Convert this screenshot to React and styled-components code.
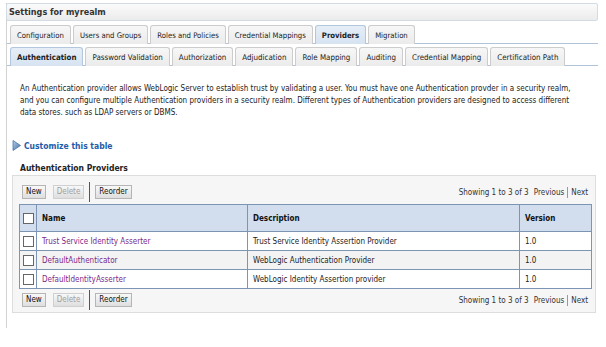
import React from "react";
import styled, { createGlobalStyle } from "styled-components";

const GlobalStyle = createGlobalStyle`
  html, body {
    margin: 0;
    padding: 0;
    background: #ffffff;
  }
  body {
    font-family: "DejaVu Sans Condensed", "DejaVu Sans", sans-serif;
    color: #000000;
  }
`;

const topTabs = [
  "Configuration",
  "Users and Groups",
  "Roles and Policies",
  "Credential Mappings",
  "Providers",
  "Migration",
];

const subTabs = [
  "Authentication",
  "Password Validation",
  "Authorization",
  "Adjudication",
  "Role Mapping",
  "Auditing",
  "Credential Mapping",
  "Certification Path",
];

const providers = [
  { name: "Trust Service Identity Asserter", desc: "Trust Service Identity Assertion Provider", version: "1.0" },
  { name: "DefaultAuthenticator", desc: "WebLogic Authentication Provider", version: "1.0" },
  { name: "DefaultIdentityAsserter", desc: "WebLogic Identity Assertion provider", version: "1.0" },
];

function ButtonBar({ bottom }) {
  return (
    <BarRow $bottom={bottom}>
      <Buttons>
        <Btn>New</Btn>
        <Btn disabled>Delete</Btn>
        <Divider />
        <Btn>Reorder</Btn>
      </Buttons>
      <Pager>
        Showing 1 to 3 of 3 <PagerLink>Previous</PagerLink>
        <PagerSep /> <PagerLink>Next</PagerLink>
      </Pager>
    </BarRow>
  );
}

function App() {
  return (
    <>
      <GlobalStyle />
      <Page>
        <Frame>
          <Header>Settings for myrealm</Header>
          <TabRow>
            {topTabs.map((t) => (
              <Tab key={t} $active={t === "Providers"}>
                {t}
              </Tab>
            ))}
          </TabRow>
          <TabRow $sub>
            {subTabs.map((t) => (
              <Tab key={t} $sub $active={t === "Authentication"}>
                {t}
              </Tab>
            ))}
          </TabRow>
          <Content>
            <Intro>
              An Authentication provider allows WebLogic Server to establish trust by validating a user. You must have one
              Authentication provder in a security realm,
              <br />
              and you can configure multiple Authentication providers in a security realm. Different types of
              Authentication providers are designed to access different
              <br />
              data stores. such as LDAP servers or DBMS.
            </Intro>
            <Customize>
              <svg width="9" height="11" viewBox="0 0 9 11">
                <defs>
                  <linearGradient id="tri" x1="0" y1="0" x2="1" y2="1">
                    <stop offset="0" stopColor="#b9cde6" />
                    <stop offset="1" stopColor="#3f6ea8" />
                  </linearGradient>
                </defs>
                <path d="M1 0.5 L8.5 5.5 L1 10.5 Z" fill="url(#tri)" stroke="#4d76a8" strokeWidth="0.8" />
              </svg>
              <span>Customize this table</span>
            </Customize>
            <SectionTitle>Authentication Providers</SectionTitle>
            <TableBox>
              <ButtonBar />
              <Table>
                <thead>
                  <tr>
                    <Th $w={17} $check>
                      <Box />
                    </Th>
                    <Th $w={211}>Name</Th>
                    <Th $w={272}>Description</Th>
                    <Th>Version</Th>
                  </tr>
                </thead>
                <tbody>
                  {providers.map((p, i) => (
                    <Tr key={p.name} $alt={i % 2 === 1}>
                      <Td $check>
                        <Box />
                      </Td>
                      <Td>
                        <Link>{p.name}</Link>
                      </Td>
                      <Td>{p.desc}</Td>
                      <Td>{p.version}</Td>
                    </Tr>
                  ))}
                </tbody>
              </Table>
              <ButtonBar bottom />
            </TableBox>
          </Content>
        </Frame>
      </Page>
    </>
  );
}

const Page = styled.div`
  width: 606px;
  height: 347px;
  padding: 3px 8px 0 6px;
  box-sizing: border-box;
`;

const Frame = styled.div`
  border-left: 1px solid #d3d3d3;
  height: 325px;
`;

const Header = styled.div`
  height: 16px;
  line-height: 16px;
  margin-left: -1px;
  padding-left: 2px;
  border: 1px solid #d3dbe4;
  border-radius: 2px;
  background: linear-gradient(#fbfbfb, #ebebeb);
  font-size: 9px;
  font-weight: bold;
  color: #333333;
`;

const TabRow = styled.div`
  display: flex;
  gap: 2px;
  margin-top: ${(p) => (p.$sub ? "2px" : "3px")};
  padding-left: 3px;
  height: 20px;
  border-bottom: 1px solid #b0c3d8;
  width: 100%;
  box-sizing: border-box;
`;

const Tab = styled.div`
  height: 19px;
  line-height: 19px;
  padding: 0 6px;
  margin-top: 1px;
  border: 1px solid ${(p) => (p.$active ? "#b3c6dc" : "#cccccc")};
  border-bottom: none;
  border-radius: 3px 3px 0 0;
  background: ${(p) => (p.$active ? "linear-gradient(#e6eef7, #d6e3f1)" : "linear-gradient(#f7f7f7, #ebebeb)")};
  font-size: ${(p) => (p.$sub ? "7.9px" : "7.7px")};
  font-weight: ${(p) => (p.$active ? "bold" : "normal")};
  color: #222222;
  white-space: nowrap;
  box-sizing: border-box;
`;

const Content = styled.div`
  padding: 0 0 0 5px;
`;

const Intro = styled.p`
  margin: 17px 8px 0 8px;
  font-size: 8px;
  line-height: 12px;
  color: #222222;
  white-space: nowrap;
`;

const Customize = styled.div`
  display: flex;
  align-items: center;
  gap: 3px;
  margin-top: 21px;
  font-size: 8.5px;
  font-weight: bold;
  color: #1f5ca8;
`;

const SectionTitle = styled.div`
  margin: 12px 0 0 8px;
  font-size: 8.5px;
  font-weight: bold;
  color: #222222;
`;

const TableBox = styled.div`
  margin-top: 2px;
  width: 584px;
  height: 138px;
  box-sizing: border-box;
  border: 1px solid #dddddd;
  background: #f6f6f6;
  padding: 6px 5px 0 6px;
`;

const BarRow = styled.div`
  display: flex;
  align-items: center;
  justify-content: space-between;
  height: 16px;
  margin: ${(p) => (p.$bottom ? "3px 0 0 3px" : "2px 0 4px 3px")};
`;

const Buttons = styled.div`
  display: flex;
  align-items: center;
  gap: 7px;
`;

const Btn = styled.div`
  height: 12px;
  line-height: 12px;
  padding: 0 3px;
  border: 1px solid ${(p) => (p.disabled ? "#d0d0d0" : "#b5b5b5")};
  background: linear-gradient(#f8f8f8, #dedede);
  font-size: 8px;
  color: ${(p) => (p.disabled ? "#a0a0a0" : "#111111")};
`;

const Divider = styled.div`
  width: 1px;
  height: 20px;
  background: #555555;
  margin: 0 -2px;
`;

const Pager = styled.div`
  font-size: 8px;
  color: #333333;
  display: flex;
  align-items: center;
  gap: 3px;
  padding-right: 2px;
  white-space: pre;
`;

const PagerLink = styled.span`
  color: #333333;
`;

const PagerSep = styled.span`
  width: 1px;
  height: 11px;
  background: #999999;
`;

const Table = styled.table`
  width: 573px;
  table-layout: fixed;
  border-collapse: collapse;
  border: 1px solid #7d95b5;
  background: #ffffff;
`;

const Th = styled.th`
  width: ${(p) => (p.$w ? `${p.$w}px` : "auto")};
  height: 27px;
  text-align: left;
  padding: ${(p) => (p.$check ? "0 0 0 3px" : "0 5px")};
  box-sizing: border-box;
  background: #d2deee;
  border: 1px solid #7d95b5;
  font-size: 8px;
  font-weight: bold;
  color: #111111;
`;

const Tr = styled.tr`
  background: ${(p) => (p.$alt ? "#f3f3f3" : "#ffffff")};
`;

const Td = styled.td`
  height: 18px;
  padding: ${(p) => (p.$check ? "0 0 0 3px" : "0 5px")};
  border: 1px solid #7d95b5;
  font-size: 8px;
  color: #222222;
  white-space: nowrap;
`;

const Box = styled.div`
  width: 9px;
  height: 9px;
  border: 1px solid #666666;
  background: #ffffff;
`;

const Link = styled.span`
  color: #7a2a8a;
`;

export default App;
